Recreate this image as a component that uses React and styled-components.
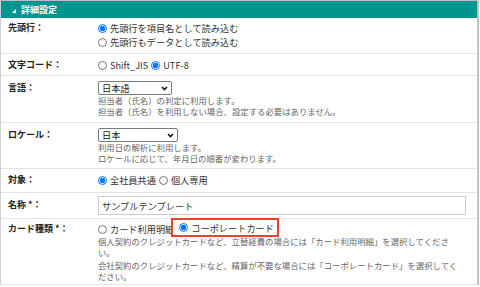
import React from "react";
import styled, { createGlobalStyle } from "styled-components";

const GlobalStyle = createGlobalStyle`
  html, body {
    margin: 0;
    padding: 0;
    background: #ffffff;
  }
  body {
    font-family: "Noto Sans CJK JP", "Noto Sans", sans-serif;
    color: #333333;
  }
`;

const Panel = styled.section`
  width: 476px;
  border-top: 1px solid #bdbdbd;
  border-left: 1px solid #d0d0d0;
  border-right: 2px solid #c2c2c2;
`;

const Header = styled.div`
  height: 17px;
  background-color: #00968f;
  color: #ffffff;
  display: flex;
  align-items: center;
  gap: 5px;
  padding-left: 11px;
  font-size: 9px;
  font-weight: bold;
  line-height: 17px;
`;

const Caret = styled.span`
  width: 0;
  height: 0;
  border-left: 4px solid transparent;
  border-bottom: 4px solid #ffffff;
  margin-top: 3px;
`;

const Row = styled.div`
  display: grid;
  grid-template-columns: 97px 1fr;
  padding: ${({ pad }) => pad || "4px 0"};
  border-bottom: 1px solid #e4e4e4;
`;

const Label = styled.div`
  padding-left: 7px;
  padding-top: ${({ top }) => top || 0}px;
  font-size: 9px;
  font-weight: bold;
  line-height: 14px;
  color: #222222;
  white-space: nowrap;
`;

const Value = styled.div`
  display: flex;
  flex-direction: column;
  align-items: flex-start;
`;

const RadioLine = styled.div`
  display: flex;
  align-items: center;
  height: 14px;
  font-size: 9.2px;
  color: #333333;
`;

const Option = styled.label`
  display: inline-flex;
  align-items: center;
  margin-right: 3px;
  white-space: nowrap;
`;

const Highlight = styled.label`
  position: relative;
  z-index: 1;
  display: inline-flex;
  align-items: center;
  white-space: nowrap;
  background: #ffffff;
  border: 2px solid #e8442c;
  height: 15px;
  padding: 0 3px 0 6px;
  margin-left: -6px;
  margin-top: -3px;
`;

const Radio = styled.input.attrs({ type: "radio" })`
  width: 9px;
  height: 9px;
  margin: 0 3px 0 0;
`;

const SelectWrap = styled.div`
  position: relative;
  display: inline-block;
`;

const Select = styled.select`
  display: block;
  appearance: none;
  width: ${({ w }) => w}px;
  height: 14px;
  box-sizing: border-box;
  font-family: inherit;
  font-size: 9.2px;
  line-height: 12px;
  padding: 0 0 0 3px;
  border: 1px solid #7a7a7a;
  border-radius: 2px;
  color: #222222;
  background: #ffffff;
`;

const Chevron = styled.svg`
  position: absolute;
  right: 4px;
  top: 5px;
  width: 7px;
  height: 5px;
  pointer-events: none;
`;

const Help = styled.div`
  font-size: 8.4px;
  line-height: 11px;
  color: #666666;
  white-space: nowrap;
  margin-top: ${({ gap }) => gap || 0}px;
`;

const TextInput = styled.input`
  width: 368px;
  height: 19px;
  box-sizing: border-box;
  border: 1px solid #cccccc;
  padding: 0 3px;
  font-family: inherit;
  font-size: 9.2px;
  color: #333333;
`;

const Dropdown = ({ w, children }) => (
  <SelectWrap>
    <Select w={w}>{children}</Select>
    <Chevron viewBox="0 0 7 5">
      <path d="M1 1 L3.5 3.5 L6 1" fill="none" stroke="#111" strokeWidth="1.6" />
    </Chevron>
  </SelectWrap>
);

export default function App() {
  return (
    <>
      <GlobalStyle />
      <Panel>
        <Header>
          <Caret />
          詳細設定
        </Header>

        <Row pad="3px 0 4px">
          <Label>先頭行：</Label>
          <Value>
            <RadioLine>
              <Option>
                <Radio name="head" defaultChecked />
                先頭行を項目名として読み込む
              </Option>
            </RadioLine>
            <RadioLine>
              <Option>
                <Radio name="head" />
                先頭行もデータとして読み込む
              </Option>
            </RadioLine>
          </Value>
        </Row>

        <Row pad="4px 0 3px">
          <Label>文字コード：</Label>
          <Value>
            <RadioLine>
              <Option>
                <Radio name="enc" />
                Shift_JIS
              </Option>
              <Option>
                <Radio name="enc" defaultChecked />
                UTF-8
              </Option>
            </RadioLine>
          </Value>
        </Row>

        <Row pad="5px 0 5px">
          <Label>言語：</Label>
          <Value>
            <Dropdown w={74}>
              <option>日本語</option>
            </Dropdown>
            <Help>担当者（氏名）の判定に利用します。</Help>
            <Help>担当者（氏名）を利用しない場合、設定する必要はありません。</Help>
          </Value>
        </Row>

        <Row pad="5px 0 4px">
          <Label>ロケール：</Label>
          <Value>
            <Dropdown w={80}>
              <option>日本</option>
            </Dropdown>
            <Help>利用日の解析に利用します。</Help>
            <Help>ロケールに応じて、年月日の順番が変わります。</Help>
          </Value>
        </Row>

        <Row pad="4px 0 5px">
          <Label>対象：</Label>
          <Value>
            <RadioLine>
              <Option>
                <Radio name="target" defaultChecked />
                全社員共通
              </Option>
              <Option>
                <Radio name="target" />
                個人専用
              </Option>
            </RadioLine>
          </Value>
        </Row>

        <Row pad="3px 0 3px">
          <Label top={2}>名称 *：</Label>
          <Value>
            <TextInput defaultValue="サンプルテンプレート" />
          </Value>
        </Row>

        <Row pad="3px 0 2px">
          <Label>カード種類 *：</Label>
          <Value>
            <RadioLine>
              <Option>
                <Radio name="card" />
                カード利用明細
              </Option>
              <Highlight>
                <Radio name="card" defaultChecked />
                コーポレートカード
              </Highlight>
            </RadioLine>
            <Help>
              個人契約のクレジットカードなど、立替経費の場合には「カード利用明細」を選択してくださ
            </Help>
            <Help>い。</Help>
            <Help gap={2}>
              会社契約のクレジットカードなど、精算が不要な場合には「コーポレートカード」を選択してく
            </Help>
            <Help>ださい。</Help>
          </Value>
        </Row>
      </Panel>
    </>
  );
}
